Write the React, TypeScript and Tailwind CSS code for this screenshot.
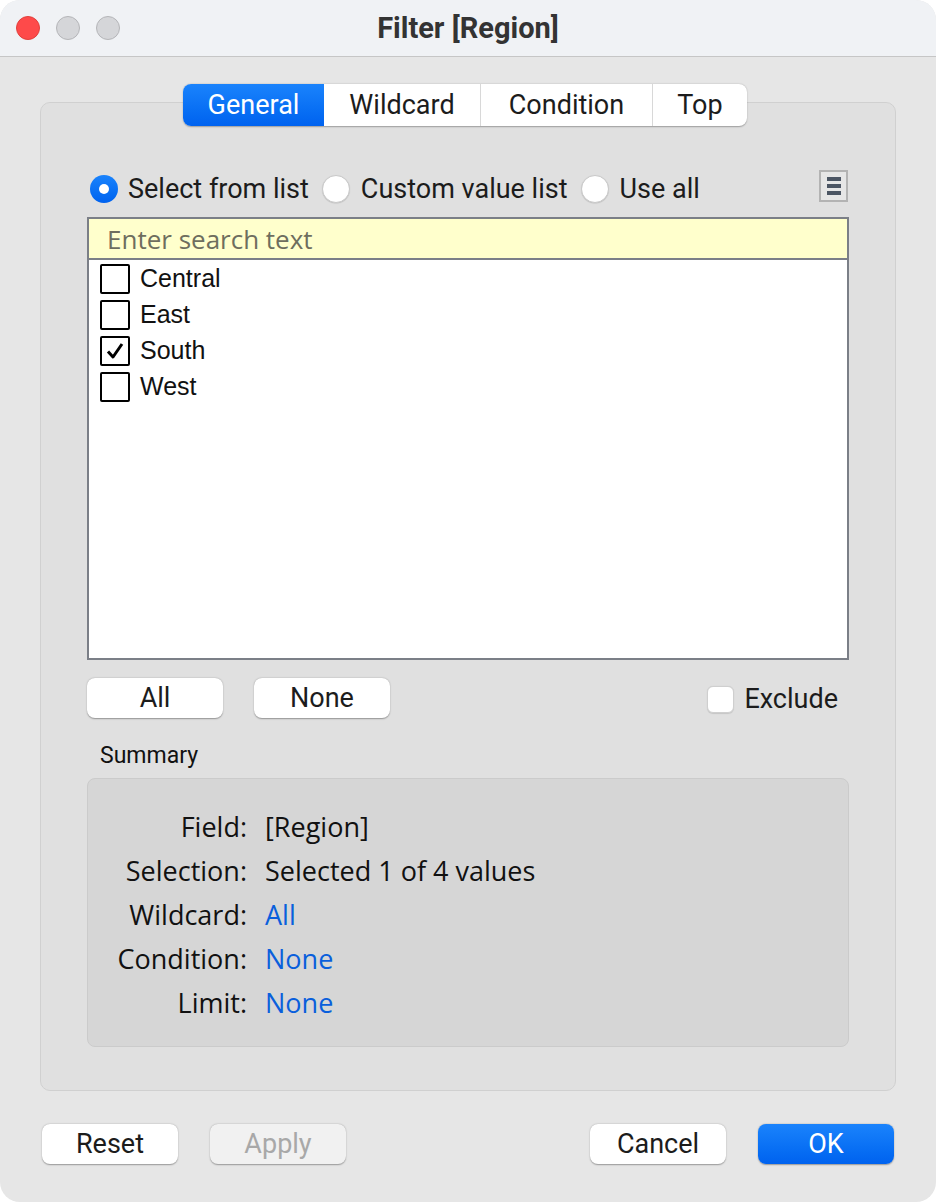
import { useState } from 'react';

const regions = [
  { label: 'Central', checked: false },
  { label: 'East', checked: false },
  { label: 'South', checked: true },
  { label: 'West', checked: false },
];

const summary = [
  { label: 'Field:', value: '[Region]', link: false },
  { label: 'Selection:', value: 'Selected 1 of 4 values', link: false },
  { label: 'Wildcard:', value: 'All', link: true },
  { label: 'Condition:', value: 'None', link: true },
  { label: 'Limit:', value: 'None', link: true },
];

const tabs = [
  { label: 'General', w: 'w-[141px]' },
  { label: 'Wildcard', w: 'w-[156px]' },
  { label: 'Condition', w: 'w-[172px]' },
  { label: 'Top', w: 'w-[95px]' },
];

const sf = "font-['Roboto','Inter',sans-serif]";
const lucida = "font-['Open_Sans','DejaVu_Sans',sans-serif]";
const helv = "font-['Liberation_Sans','Arial',sans-serif]";

function PushButton({ label, primary, disabled }: { label: string; primary?: boolean; disabled?: boolean }) {
  return (
    <button
      className={[
        'w-[136px] h-[40px] rounded-[8px] text-[27px] leading-none flex items-center justify-center shadow-[0_0.5px_1.5px_rgba(0,0,0,0.35)]',
        sf,
        primary
          ? 'bg-gradient-to-b from-[#1a83fc] to-[#0062ef] text-white'
          : disabled
            ? 'bg-[#f1f1f1] text-[#a8a8a8]'
            : 'bg-white text-[#1c1c1c]',
      ].join(' ')}
    >
      {label}
    </button>
  );
}

function Radio({ on }: { on?: boolean }) {
  return on ? (
    <span className="w-[28px] h-[28px] shrink-0 rounded-full bg-gradient-to-b from-[#1a83fc] to-[#0062ef] flex items-center justify-center">
      <span className="w-[10px] h-[10px] rounded-full bg-white" />
    </span>
  ) : (
    <span className="w-[28px] h-[28px] shrink-0 rounded-full bg-white border border-[#c9c9c9] shadow-[0_0.5px_1px_rgba(0,0,0,0.15)]" />
  );
}

export default function App() {
  const [items] = useState(regions);

  return (
    <div className="w-[936px] h-[1202px] bg-white">
      <div className="h-full rounded-[20px] bg-[#e6e6e6] overflow-hidden flex flex-col">
        {/* title bar */}
        <div className="h-[57px] shrink-0 bg-[#f0f2f5] border-b border-[#c6c6c6] flex items-center px-[16px]">
          <div className="flex gap-[16px] w-[120px]">
            <span className="w-[24px] h-[24px] rounded-full bg-[#fe4a4a] border border-[#e0403c]" />
            <span className="w-[24px] h-[24px] rounded-full bg-[#d5d6d9] border border-[#b4b5b8]" />
            <span className="w-[24px] h-[24px] rounded-full bg-[#d5d6d9] border border-[#b4b5b8]" />
          </div>
          <div className={`flex-1 text-center text-[29px] leading-none font-bold text-[#333] ${sf}`}>Filter [Region]</div>
          <div className="w-[120px]" />
        </div>

        <div className="flex-1 px-[40px] pt-[45px]">
          {/* group box */}
          <div className="h-[989px] rounded-[10px] bg-[#e0e0e0] border border-[#d0d0d0] flex flex-col px-[46px]">
            <div className="-mt-[19px] flex justify-center pr-[6px]">
              <div className={`flex h-[42px] rounded-[8px] bg-white shadow-[0_0.5px_1.5px_rgba(0,0,0,0.3)] overflow-hidden text-[27px] leading-none ${sf}`}>
                {tabs.map((t, i) => (
                  <div
                    key={t.label}
                    className={[
                      'flex items-center justify-center',
                      t.w,
                      i === 0
                        ? 'bg-gradient-to-b from-[#1a83fc] to-[#0062ef] text-white'
                        : 'text-[#1c1c1c]',
                      i > 1 ? 'border-l border-[#d8d8d8]' : '',
                    ].join(' ')}
                  >
                    {t.label}
                  </div>
                ))}
              </div>
            </div>

            {/* radio row */}
            <div className={`mt-[49px] h-[28px] flex items-center text-[27px] leading-none text-[#1c1c1c] ${sf}`}>
              <div className="flex items-center pl-[3px]">
                <Radio on />
                <span className="ml-[10px]">Select from list</span>
              </div>
              <div className="flex items-center ml-[13px]">
                <Radio />
                <span className="ml-[11px]">Custom value list</span>
              </div>
              <div className="flex items-center ml-[13px]">
                <Radio />
                <span className="ml-[11px]">Use all</span>
              </div>
              <div className="ml-auto mr-[1px] -mt-[6px] w-[29px] h-[32px] bg-[#e6e6e6] border-2 border-[#b3b3b3] flex flex-col items-center justify-center gap-[3px]">
                <span className="w-[14px] h-[4px] bg-[#4b5563]" />
                <span className="w-[14px] h-[4px] bg-[#4b5563]" />
                <span className="w-[14px] h-[4px] bg-[#4b5563]" />
              </div>
            </div>

            {/* list */}
            <div className="mt-[14px] h-[443px] shrink-0 border-2 border-[#7b7f87] bg-white flex flex-col">
              <div className={`h-[41px] shrink-0 bg-[#ffffcc] border-b-2 border-[#7b7f87] flex items-center pl-[18px] text-[26px] leading-none text-[#6e6e5e] ${lucida}`}>
                Enter search text
              </div>
              <div className={`pt-[1px] pl-[11px] flex flex-col text-[25px] text-[#111] ${helv}`}>
                {items.map((r) => (
                  <div key={r.label} className="h-[36px] flex items-center">
                    <span className="w-[30px] h-[30px] border-2 border-black rounded-[2px] flex items-center justify-center">
                      {r.checked && (
                        <svg width="20" height="20" viewBox="0 0 20 20">
                          <path d="M3 10.5 L8 16 L17 3" fill="none" stroke="#000" strokeWidth="3" strokeLinejoin="round" />
                        </svg>
                      )}
                    </span>
                    <span className="ml-[10px]">{r.label}</span>
                  </div>
                ))}
              </div>
            </div>

            {/* All / None / Exclude */}
            <div className="mt-[18px] flex items-center">
              <PushButton label="All" />
              <div className="ml-[31px]">
                <PushButton label="None" />
              </div>
              <div className={`ml-auto mr-[11px] mt-[3px] flex items-center text-[27px] leading-none text-[#1c1c1c] ${sf}`}>
                <span className="w-[27px] h-[27px] rounded-[6px] bg-white border border-[#cfcfcf] shadow-[0_0.5px_1px_rgba(0,0,0,0.12)]" />
                <span className="ml-[10px]">Exclude</span>
              </div>
            </div>

            <div className={`mt-[26px] pl-[13px] text-[23px] leading-none text-[#111] ${sf}`}>Summary</div>

            {/* summary box */}
            <div className={`mt-[11px] h-[269px] rounded-[8px] bg-[#d6d6d6] border border-[#cbcbcb] pt-[28px] text-[27px] ${lucida}`}>
              {summary.map((s) => (
                <div key={s.label} className="h-[44px] flex items-start leading-[40px]">
                  <span className="w-[159px] text-right text-[#111]">{s.label}</span>
                  <span className={`ml-[18px] ${s.link ? 'text-[#0a5fdc]' : 'text-[#111]'}`}>{s.value}</span>
                </div>
              ))}
            </div>
          </div>

          {/* footer buttons */}
          <div className="mt-[33px] flex items-center px-[2px]">
            <PushButton label="Reset" />
            <div className="ml-[32px]">
              <PushButton label="Apply" disabled />
            </div>
            <div className="ml-auto">
              <PushButton label="Cancel" />
            </div>
            <div className="ml-[32px]">
              <PushButton label="OK" primary />
            </div>
          </div>
        </div>
      </div>
    </div>
  );
}
